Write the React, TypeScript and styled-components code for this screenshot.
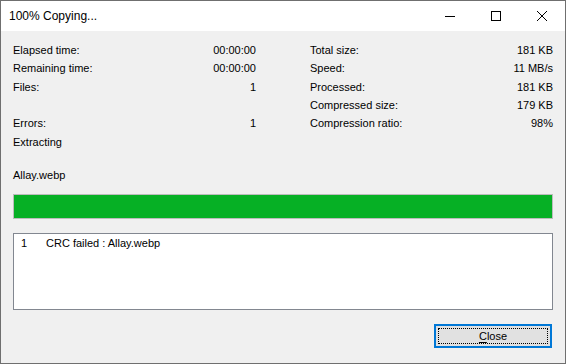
import React from "react";
import styled, { createGlobalStyle } from "styled-components";

const GlobalStyle = createGlobalStyle`
  html, body {
    margin: 0;
    padding: 0;
    background: #fff;
  }
  * {
    box-sizing: border-box;
  }
`;

const Window = styled.div`
  width: 566px;
  height: 364px;
  border: 1px solid #6f6f6f;
  display: flex;
  flex-direction: column;
  font-family: "Liberation Sans", Arial, sans-serif;
  font-size: 11px;
  color: #000;
  overflow: hidden;
`;

const TitleBar = styled.div`
  height: 30px;
  flex: none;
  background: #fff;
  display: flex;
  align-items: center;
`;

const Title = styled.div`
  flex: 1;
  padding-left: 8px;
  font-size: 12px;
  line-height: 16px;
`;

const CaptionButton = styled.div`
  width: 46px;
  height: 30px;
  display: flex;
  align-items: center;
  justify-content: center;
  svg {
    display: block;
  }
`;

const Body = styled.div`
  flex: 1;
  background: #f0f0f0;
  padding: 10.5px 12px 0 12px;
  display: flex;
  flex-direction: column;
`;

const Stats = styled.div`
  display: grid;
  grid-template-columns: 243px 243px;
  column-gap: 54px;
`;

const Column = styled.div`
  display: flex;
  flex-direction: column;
`;

const Row = styled.div`
  height: 18.3px;
  display: flex;
  align-items: center;
  justify-content: space-between;
  line-height: 13px;
  white-space: nowrap;
`;

const FileName = styled.div`
  margin-top: 18px;
  line-height: 13px;
`;

const Progress = styled.div`
  margin-top: 11.5px;
  height: 25px;
  border: 1px solid #bcbcbc;
  background: #e6e6e6;
`;

const ProgressFill = styled.div`
  height: 100%;
  background: #06b025;
`;

const LogBox = styled.div`
  margin-top: 14px;
  height: 77px;
  border: 1px solid #828790;
  background: #fff;
  padding: 3px 0 0 7px;
`;

const LogLine = styled.div`
  display: flex;
  line-height: 13px;
`;

const LogIndex = styled.span`
  width: 25px;
`;

const Footer = styled.div`
  margin-top: 14px;
  display: flex;
  justify-content: flex-end;
  padding-right: 1px;
`;

const Button = styled.button`
  width: 118px;
  height: 24px;
  padding: 2px;
  border: 2px solid #0078d7;
  background: #e1e1e1;
  font-family: inherit;
  font-size: 11px;
  color: #000;
  cursor: default;
  span {
    display: flex;
    align-items: center;
    justify-content: center;
    width: 100%;
    height: 100%;
    border: 1px dotted #000;
  }
  u {
    text-underline-offset: 2px;
  }
`;

type Stat = { label: string; value: string };

const leftStats: (Stat | null)[] = [
  { label: "Elapsed time:", value: "00:00:00" },
  { label: "Remaining time:", value: "00:00:00" },
  { label: "Files:", value: "1" },
  null,
  { label: "Errors:", value: "1" },
  { label: "Extracting", value: "" },
];

const rightStats: Stat[] = [
  { label: "Total size:", value: "181 KB" },
  { label: "Speed:", value: "11 MB/s" },
  { label: "Processed:", value: "181 KB" },
  { label: "Compressed size:", value: "179 KB" },
  { label: "Compression ratio:", value: "98%" },
];

const StatColumn = ({ items }: { items: (Stat | null)[] }) => (
  <Column>
    {items.map((s, i) => (
      <Row key={i}>
        {s && (
          <>
            <span>{s.label}</span>
            <span>{s.value}</span>
          </>
        )}
      </Row>
    ))}
  </Column>
);

const App = () => {
  const progress = 100;
  return (
    <>
      <GlobalStyle />
      <Window>
        <TitleBar>
          <Title>100% Copying...</Title>
          <CaptionButton>
            <svg width="10" height="10" viewBox="0 0 10 10">
              <line x1="0" y1="5.5" x2="10" y2="5.5" stroke="#000" strokeWidth="1" />
            </svg>
          </CaptionButton>
          <CaptionButton>
            <svg width="10" height="10" viewBox="0 0 10 10">
              <rect x="0.5" y="0.5" width="9" height="9" fill="none" stroke="#000" strokeWidth="1" />
            </svg>
          </CaptionButton>
          <CaptionButton>
            <svg width="10" height="10" viewBox="0 0 10 10">
              <path d="M0 0 L10 10 M10 0 L0 10" stroke="#000" strokeWidth="1" />
            </svg>
          </CaptionButton>
        </TitleBar>
        <Body>
          <Stats>
            <StatColumn items={leftStats} />
            <StatColumn items={rightStats} />
          </Stats>
          <FileName>Allay.webp</FileName>
          <Progress>
            <ProgressFill style={{ width: `${progress}%` }} />
          </Progress>
          <LogBox>
            <LogLine>
              <LogIndex>1</LogIndex>
              <span>CRC failed : Allay.webp</span>
            </LogLine>
          </LogBox>
          <Footer>
            <Button>
              <span>
                <u>C</u>lose
              </span>
            </Button>
          </Footer>
        </Body>
      </Window>
    </>
  );
};

export default App;
